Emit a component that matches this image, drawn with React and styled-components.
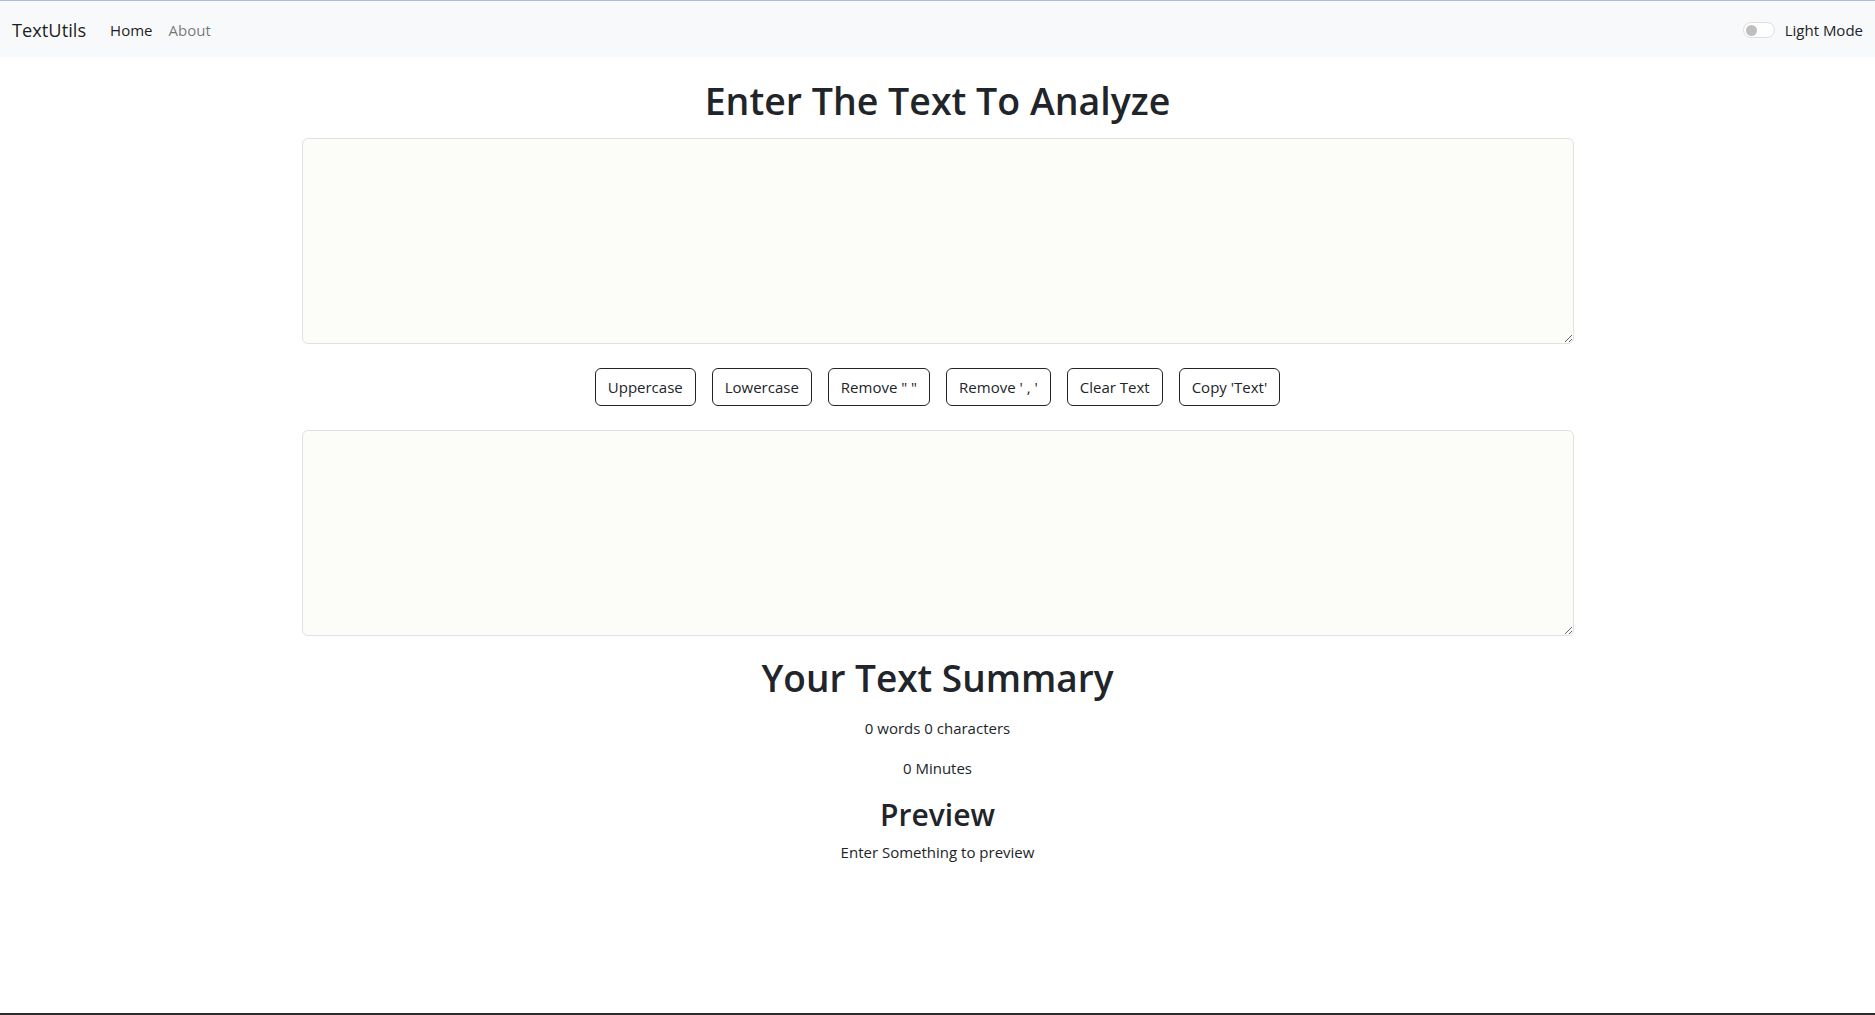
import React, { useState } from 'react';
import styled, { createGlobalStyle } from 'styled-components';

const GlobalStyle = createGlobalStyle`
    * {
        box-sizing: border-box;
    }

    body {
        margin: 0;
        font-family: "Segoe UI", "Open Sans", "Noto Sans", sans-serif;
        font-size: 15px;
        line-height: 24px;
        color: #212529;
        background: #fff;
    }
`

const App = () => {
    const [text, setText] = useState('');

    const words = text.split(/\s+/).filter((w) => w.length > 0).length;
    const minutes = 0.008 * words;

    return (
        <>
            <GlobalStyle />

            <Navbar>
                <NavLeft>
                    <Brand href='#'>TextUtils</Brand>
                    <NavLink href='#' active>Home</NavLink>
                    <NavLink href='#'>About</NavLink>
                </NavLeft>

                <ModeToggle>
                    <Switch>
                        <Knob />
                    </Switch>
                    Light Mode
                </ModeToggle>
            </Navbar>

            <Container>
                <Title>Enter The Text To Analyze</Title>

                <TextBox value={ text } onChange={ (e) => setText(e.target.value) } />

                <ButtonRow>
                    <Button onClick={ () => setText(text.toUpperCase()) }>Uppercase</Button>
                    <Button onClick={ () => setText(text.toLowerCase()) }>Lowercase</Button>
                    <Button>Remove " "</Button>
                    <Button>Remove ' , '</Button>
                    <Button onClick={ () => setText('') }>Clear Text</Button>
                    <Button>Copy 'Text'</Button>
                </ButtonRow>

                <TextBox readOnly value='' />

                <Summary>
                    <SummaryTitle>Your Text Summary</SummaryTitle>
                    <Para>{ words } words { text.length } characters</Para>
                    <Para>{ minutes } Minutes</Para>
                    <SubTitle>Preview</SubTitle>
                    <Preview>{ text.length > 0 ? text : 'Enter Something to preview' }</Preview>
                </Summary>
            </Container>

            <ScrollEdge />
        </>
    );
}

export default App;

const Navbar = styled.nav`
    display: flex;
    align-items: center;
    justify-content: space-between;
    height: 57px;
    padding: 2px 12px 0;
    border-top: 1px solid #a9bbdf;
    background: #f8f9fa;
`

const NavLeft = styled.div`
    display: flex;
    align-items: center;
`

const Brand = styled.a`
    font-size: 18.25px;
    color: rgba(0, 0, 0, 0.9);
    text-decoration: none;
    margin-right: 16px;
    padding: 5px 0;
`

const NavLink = styled.a`
    padding: 8px;
    color: ${ (props) => props.active ? 'rgba(0, 0, 0, 0.9)' : 'rgba(0, 0, 0, 0.55)' };
    text-decoration: none;
`

const ModeToggle = styled.label`
    display: flex;
    align-items: center;
    gap: 10px;
    color: #212529;
`

const Switch = styled.span`
    display: flex;
    align-items: center;
    width: 32px;
    height: 16px;
    padding: 0 2px;
    border: 1px solid #dfdfdf;
    border-radius: 8px;
    background: #fff;
`

const Knob = styled.span`
    width: 11px;
    height: 11px;
    border-radius: 50%;
    background: #bfbfbf;
`

const Container = styled.main`
    max-width: 1272px;
    margin: 0 auto;
    padding-top: 20px;
`

const Title = styled.h1`
    margin: 0 0 13px;
    font-size: 37.5px;
    line-height: 48px;
    font-weight: 600;
    text-align: center;
`

const TextBox = styled.textarea`
    display: block;
    width: 100%;
    height: 206px;
    padding: 6px 12px;
    border: 1px solid #dee2e6;
    border-radius: 6px;
    background: #fcfcf9;
    font: inherit;
    color: #212529;
    resize: vertical;
    outline: none;
`

const ButtonRow = styled.div`
    display: flex;
    justify-content: center;
    gap: 16px;
    margin: 24px 0 24px;
`

const Button = styled.button`
    height: 38px;
    padding: 6px 12px;
    border: 1px solid #212529;
    border-radius: 6px;
    background: transparent;
    font: inherit;
    color: #212529;
    cursor: pointer;

    &:hover {
        background: #212529;
        color: #fff;
    }
`

const Summary = styled.section`
    padding-top: 18px;
    text-align: center;
`

const SummaryTitle = styled.h1`
    margin: 0 0 14px;
    font-size: 37px;
    line-height: 48px;
    font-weight: 600;
`

const Para = styled.p`
    margin: 0 0 16px;
`

const SubTitle = styled.h2`
    margin: 2px 0 6px;
    font-size: 30px;
    line-height: 38px;
    font-weight: 600;
`

const Preview = styled.p`
    margin: 0;
`

const ScrollEdge = styled.div`
    position: fixed;
    left: 0;
    right: 0;
    bottom: 0;
    height: 2px;
    background: #2d2d2d;
`
